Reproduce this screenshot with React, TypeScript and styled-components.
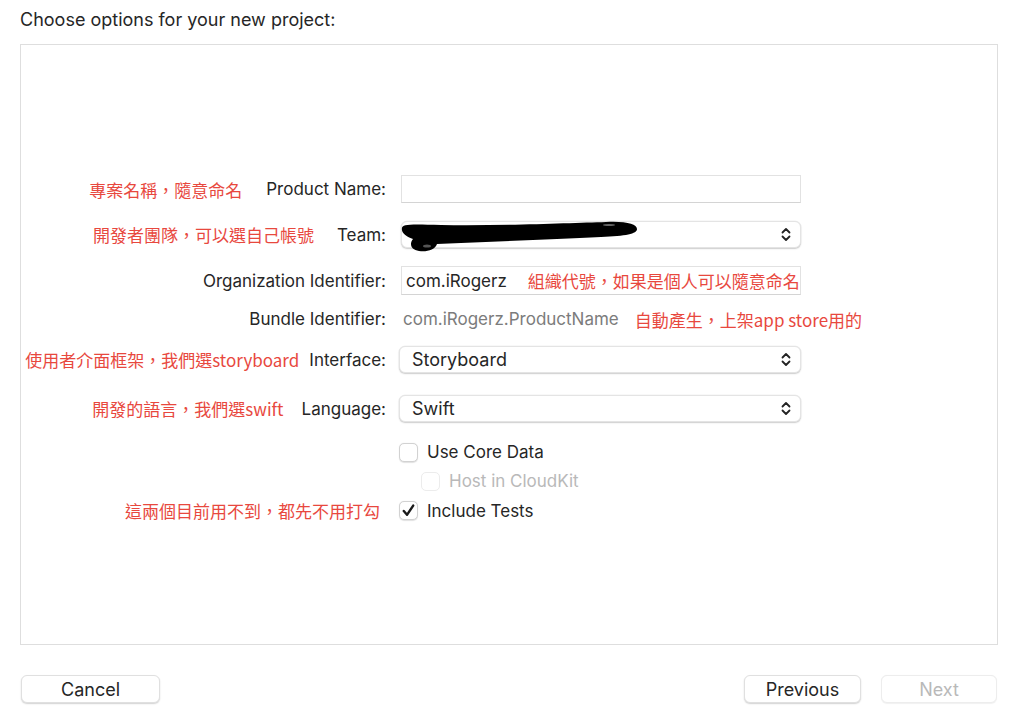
import React from 'react';
import styled, { createGlobalStyle } from 'styled-components';

const GlobalStyle = createGlobalStyle`
    html, body {
        margin: 0;
        padding: 0;
        background: #ffffff;
    }
    body {
        font-family: Inter, "Noto Sans CJK TC", "Liberation Sans", sans-serif;
        color: #262626;
        -webkit-font-smoothing: antialiased;
    }
`;

const RED = '#e8483e';

const Chevrons: React.FC = () => (
    <svg width="10" height="15" viewBox="0 0 10 15" fill="none">
        <path d="M1.5 5.5 L5 2 L8.5 5.5" stroke="#232323" strokeWidth="1.8" strokeLinecap="round" strokeLinejoin="round" />
        <path d="M1.5 9.5 L5 13 L8.5 9.5" stroke="#232323" strokeWidth="1.8" strokeLinecap="round" strokeLinejoin="round" />
    </svg>
);

const Check: React.FC = () => (
    <svg width="15" height="15" viewBox="0 0 15 15" fill="none">
        <path d="M2.8 8 L6 11.8 L12.2 2.6" stroke="#1a1a1a" strokeWidth="2.4" strokeLinecap="round" strokeLinejoin="round" />
    </svg>
);

// scribble that hides the team name
const Scribble: React.FC = () => (
    <ScribbleSvg width="242" height="34" viewBox="0 0 242 34">
        <path
            d="M1 8 C1 4 10 4 40 5 C100 6 170 3 205 2 C225 1 236 4 236 9 C236 14 225 16 200 17 C160 19 110 21 60 23 L36 24 C34 30 26 32 18 31 C10 30 8 24 12 19 C4 16 0 12 1 8 Z"
            fill="#000"
        />
        <ellipse cx="26" cy="26" rx="4" ry="1.6" fill="#555" />
        <ellipse cx="208" cy="5" rx="6" ry="1" fill="#666" />
    </ScribbleSvg>
);

export default function App() {
    return (
        <>
            <GlobalStyle />
            <Page>
                <Title>Choose options for your new project:</Title>
                <Panel>
                    <Form>
                        <FormRow $top={130} $height={28}>
                            <LabelCell $gap={24}>
                                <Note>專案名稱，隨意命名</Note>
                                <Label>Product Name:</Label>
                            </LabelCell>
                            <TextField />
                        </FormRow>

                        <FormRow $top={18} $height={27}>
                            <LabelCell $gap={23}>
                                <Note>開發者團隊，可以選自己帳號</Note>
                                <Label>Team:</Label>
                            </LabelCell>
                            <Popup>
                                <PopupText />
                                <Chevrons />
                                <Scribble />
                            </Popup>
                        </FormRow>

                        <FormRow $top={18} $height={29}>
                            <LabelCell $gap={0}>
                                <Label>Organization Identifier:</Label>
                            </LabelCell>
                            <TextField>
                                <FieldValue>com.iRogerz</FieldValue>
                                <InlineNote $gap={21}>組織代號，如果是個人可以隨意命名</InlineNote>
                            </TextField>
                        </FormRow>

                        <FormRow $top={10} $height={28}>
                            <LabelCell $gap={0}>
                                <Label>Bundle Identifier:</Label>
                            </LabelCell>
                            <StaticValue>
                                <GrayValue>com.iRogerz.ProductName</GrayValue>
                                <InlineNote $gap={16}>自動產生，上架app store用的</InlineNote>
                            </StaticValue>
                        </FormRow>

                        <FormRow $top={13} $height={27}>
                            <LabelCell $gap={10}>
                                <Note>使用者介面框架，我們選storyboard</Note>
                                <Label>Interface:</Label>
                            </LabelCell>
                            <Popup $wide>
                                <PopupText>Storyboard</PopupText>
                                <Chevrons />
                            </Popup>
                        </FormRow>

                        <FormRow $top={22} $height={27}>
                            <LabelCell $gap={18}>
                                <Note>開發的語言，我們選swift</Note>
                                <Label>Language:</Label>
                            </LabelCell>
                            <Popup $wide>
                                <PopupText>Swift</PopupText>
                                <Chevrons />
                            </Popup>
                        </FormRow>

                        <FormRow $top={20} $height={20}>
                            <LabelCell $gap={0} />
                            <CheckRow>
                                <CheckBox />
                                <CheckLabel>Use Core Data</CheckLabel>
                            </CheckRow>
                        </FormRow>

                        <FormRow $top={9} $height={19}>
                            <LabelCell $gap={0} />
                            <CheckRow $indent>
                                <CheckBox $disabled />
                                <CheckLabel $disabled>Host in CloudKit</CheckLabel>
                            </CheckRow>
                        </FormRow>

                        <FormRow $top={8} $height={20}>
                            <LabelCell $gap={0} $inset={6}>
                                <Note>這兩個目前用不到，都先不用打勾</Note>
                            </LabelCell>
                            <CheckRow>
                                <CheckBox>
                                    <Check />
                                </CheckBox>
                                <CheckLabel>Include Tests</CheckLabel>
                            </CheckRow>
                        </FormRow>
                    </Form>
                </Panel>
                <Footer>
                    <Button $width={139}>Cancel</Button>
                    <ButtonGroup>
                        <Button $width={117}>Previous</Button>
                        <Button $width={116} $disabled>
                            Next
                        </Button>
                    </ButtonGroup>
                </Footer>
            </Page>
        </>
    );
}

const Page = styled.div`
    width: 1024px;
    height: 728px;
    box-sizing: border-box;
    padding: 8px 26px 0 20px;
    display: flex;
    flex-direction: column;
`;

const Title = styled.div`
    font-size: 18px;
    line-height: 24px;
    color: #262626;
    height: 24px;
`;

const Panel = styled.div`
    margin-top: 12px;
    height: 601px;
    box-sizing: border-box;
    border: 1.5px solid #dedede;
    background: #ffffff;
`;

const Form = styled.div`
    display: flex;
    flex-direction: column;
`;

const FormRow = styled.div<{ $top: number; $height: number }>`
    display: grid;
    grid-template-columns: 365px 400px;
    column-gap: 15px;
    align-items: center;
    margin-top: ${p => p.$top}px;
    height: ${p => p.$height}px;
`;

const LabelCell = styled.div<{ $gap: number; $inset?: number }>`
    display: flex;
    justify-content: flex-end;
    align-items: center;
    gap: ${p => p.$gap}px;
    padding-right: ${p => p.$inset ?? 0}px;
    white-space: nowrap;
`;

const Label = styled.span`
    font-size: 17px;
    color: #262626;
`;

const Note = styled.span`
    font-family: "Noto Sans CJK TC", Inter, sans-serif;
    font-size: 17px;
    color: ${RED};
`;

const InlineNote = styled(Note)<{ $gap: number }>`
    margin-left: ${p => p.$gap}px;
`;

const TextField = styled.div`
    height: 100%;
    box-sizing: border-box;
    border: 1px solid #e2e2e2;
    border-bottom-color: #d4d4d4;
    background: #fff;
    display: flex;
    align-items: center;
    padding-left: 4px;
    white-space: nowrap;
`;

const FieldValue = styled.span`
    font-size: 17px;
    color: #262626;
`;

const StaticValue = styled.div`
    display: flex;
    align-items: center;
    padding-left: 2px;
    white-space: nowrap;
    overflow: visible;
`;

const GrayValue = styled.span`
    font-size: 17px;
    color: #7c7c7c;
`;

const Popup = styled.div<{ $wide?: boolean }>`
    position: relative;
    height: 100%;
    box-sizing: border-box;
    margin-left: ${p => (p.$wide ? '-2px' : '0')};
    border-radius: 6px;
    background: #fff;
    border: 0.5px solid #e4e4e4;
    box-shadow: 0 1px 1.5px rgba(0, 0, 0, 0.18), 0 0 0 0.5px rgba(0, 0, 0, 0.05);
    display: flex;
    align-items: center;
    justify-content: space-between;
    padding: 0 9px 0 12px;
`;

const PopupText = styled.span`
    font-size: 18px;
    color: #262626;
`;

const ScribbleSvg = styled.svg`
    position: absolute;
    left: -1px;
    top: -2px;
`;

const CheckRow = styled.div<{ $indent?: boolean }>`
    display: flex;
    align-items: center;
    gap: 9px;
    margin-left: ${p => (p.$indent ? '20px' : '-2px')};
`;

const CheckBox = styled.div<{ $disabled?: boolean }>`
    width: 19px;
    height: 19px;
    box-sizing: border-box;
    border-radius: 5px;
    border: 1px solid ${p => (p.$disabled ? '#ececec' : '#d2d2d2')};
    background: #fff;
    box-shadow: ${p => (p.$disabled ? 'none' : '0 0.5px 1px rgba(0, 0, 0, 0.12)')};
    display: flex;
    align-items: center;
    justify-content: center;
`;

const CheckLabel = styled.span<{ $disabled?: boolean }>`
    font-size: 17px;
    color: ${p => (p.$disabled ? '#b9b9b9' : '#262626')};
`;

const Footer = styled.div`
    margin-top: 30px;
    display: flex;
    justify-content: space-between;
    padding-left: 1px;
`;

const ButtonGroup = styled.div`
    display: flex;
    gap: 20px;
    margin-right: 1px;
`;

const Button = styled.button<{ $width: number; $disabled?: boolean }>`
    width: ${p => p.$width}px;
    height: 28px;
    border-radius: 6px;
    border: 0.5px solid ${p => (p.$disabled ? '#ededed' : '#e0e0e0')};
    background: #fff;
    box-shadow: ${p =>
        p.$disabled ? '0 0.5px 1px rgba(0, 0, 0, 0.06)' : '0 1px 1.5px rgba(0, 0, 0, 0.18)'};
    font-family: Inter, "Liberation Sans", sans-serif;
    font-size: 18px;
    color: ${p => (p.$disabled ? '#b9b9b9' : '#262626')};
    padding: 0;
    cursor: default;
`;
